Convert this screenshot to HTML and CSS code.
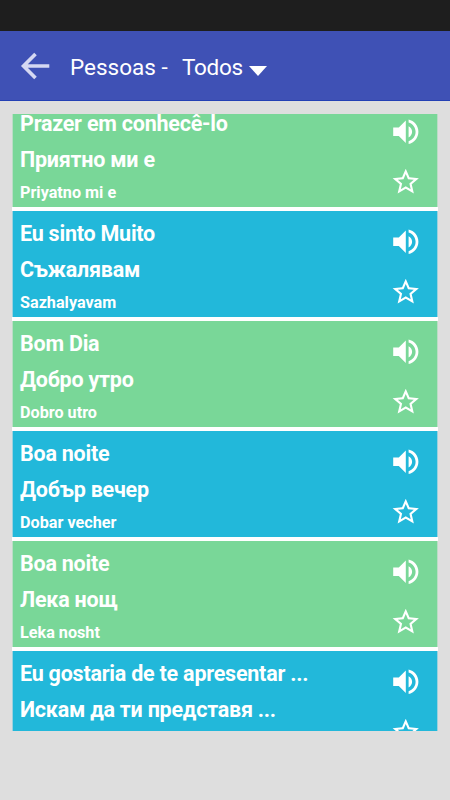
FILE: index.html
```html
<!DOCTYPE html>
<html lang="pt">
<head>
<meta charset="utf-8">
<title>Pessoas</title>
<link rel="stylesheet" href="styles.css">
</head>
<body>
<svg class="defs" width="0" height="0">
  <symbol id="sound" viewBox="0 0 24 24"><path d="M3 9v6h4l5 5V4L7 9H3zm13.5 3c0-1.77-1.02-3.29-2.5-4.03v8.05c1.48-.73 2.5-2.25 2.5-4.02zM14 3.23v2.06c2.89.86 5 3.54 5 6.71s-2.11 5.85-5 6.71v2.06c4.01-.91 7-4.49 7-8.77s-2.99-7.86-7-8.77z"/></symbol>
  <symbol id="star" viewBox="0 0 24 24"><path d="M22 9.24l-7.19-.62L12 2 9.19 8.63 2 9.24l5.46 4.73L5.82 21 12 17.27 18.18 21l-1.63-7.03L22 9.24zM12 15.4l-3.76 2.27 1-4.28-3.32-2.88 4.38-.38L12 6.1l1.71 4.04 4.38.38-3.32 2.88 1 4.28L12 15.4z"/></symbol>
</svg>
<div class="status"></div>
<header class="bar">
  <svg class="back" viewBox="0 0 30 28"><path d="M29.300 14H4M15.500 2L3.500 14L15.500 26"/></svg>
  <span class="title">Pessoas -</span>
  <span class="filter">Todos</span>
  <svg class="caret" viewBox="0 0 18 10"><path d="M0 0h18L9 10z"/></svg>
</header>
<main class="list">
  <article class="card green first">
    <div class="text"><p class="phrase">Prazer em conhecê-lo</p><p class="phrase">Приятно ми е</p><p class="latin">Priyatno mi e</p></div>
    <div class="icons"><svg class="sound"><use href="#sound"/></svg><svg class="star"><use href="#star"/></svg></div>
  </article>
  <article class="card blue">
    <div class="text"><p class="phrase">Eu sinto Muito</p><p class="phrase">Съжалявам</p><p class="latin">Sazhalyavam</p></div>
    <div class="icons"><svg class="sound"><use href="#sound"/></svg><svg class="star"><use href="#star"/></svg></div>
  </article>
  <article class="card green">
    <div class="text"><p class="phrase">Bom Dia</p><p class="phrase">Добро утро</p><p class="latin">Dobro utro</p></div>
    <div class="icons"><svg class="sound"><use href="#sound"/></svg><svg class="star"><use href="#star"/></svg></div>
  </article>
  <article class="card blue">
    <div class="text"><p class="phrase">Boa noite</p><p class="phrase">Добър вечер</p><p class="latin">Dobar vecher</p></div>
    <div class="icons"><svg class="sound"><use href="#sound"/></svg><svg class="star"><use href="#star"/></svg></div>
  </article>
  <article class="card green">
    <div class="text"><p class="phrase">Boa noite</p><p class="phrase">Лека нощ</p><p class="latin">Leka nosht</p></div>
    <div class="icons"><svg class="sound"><use href="#sound"/></svg><svg class="star"><use href="#star"/></svg></div>
  </article>
  <article class="card blue">
    <div class="text"><p class="phrase">Eu gostaria de te apresentar ...</p><p class="phrase">Искам да ти представя ...</p></div>
    <div class="icons"><svg class="sound"><use href="#sound"/></svg><svg class="star"><use href="#star"/></svg></div>
  </article>
</main>
</body>
</html>
```
FILE: styles.css
```css
* { box-sizing: border-box; }
body {
  margin: 0;
  height: 800px;
  overflow: hidden;
  background: #dedede;
  color: #fff;
  font-family: Roboto, "Liberation Sans", sans-serif;
}
.defs { display: block; }
svg { display: block; flex: none; }
.status { height: 31px; background: #1e1e1e; }
.bar {
  display: flex;
  align-items: center;
  height: 70px;
  padding-left: 20px;
  background: #3f51b5;
  border-bottom: 1px solid #2440b4;
  font-size: 22.5px;
  line-height: 30px;
  white-space: nowrap;
}
.back { width: 30px; height: 28px; fill: none; stroke: #d5d8f2; stroke-width: 3.6; }
.title { width: 112px; margin: 2px 0 0 20px; }
.filter { width: 67px; margin-top: 2px; letter-spacing: -0.3px; }
.caret { width: 18px; height: 10px; margin-top: 10px; fill: #fff; }
.list {
  display: flex;
  flex-direction: column;
  gap: 4px;
  width: 426px;
  height: 617px;
  margin: 13px 0 0 12px;
  overflow: hidden;
  background: #fff;
}
.card {
  display: flex;
  flex: none;
  justify-content: space-between;
  height: 106px;
  padding: 5px 14px 0 7px;
  border: solid rgba(222, 222, 222, 0.65);
  border-width: 0 1px;
}
.first { margin-top: -13px; }
.green { background: #79d798; }
.blue { background: #22b8da; }
.phrase, .latin { margin: 0; font-weight: 700; white-space: nowrap; }
.phrase { font-size: 21.5px; line-height: 36px; letter-spacing: -0.23px; }
.latin { font-size: 16.2px; line-height: 30px; }
.icons { display: flex; flex-direction: column; align-items: center; padding-top: 9px; fill: #fff; }
.sound { width: 33.6px; height: 33.6px; }
.star { width: 31.5px; height: 31.5px; margin-top: 17.4px; }
```
